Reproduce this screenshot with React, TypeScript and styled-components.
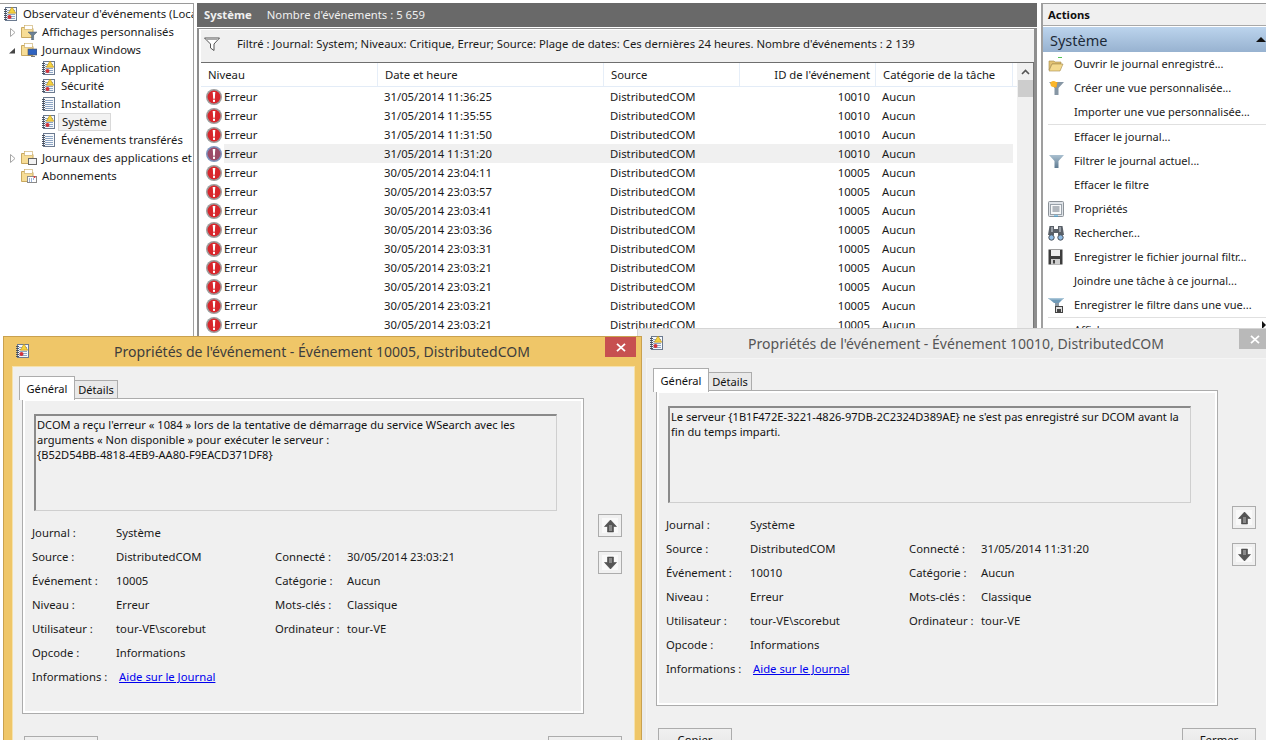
import React from 'react';
import styled, { createGlobalStyle } from 'styled-components';

const Global = createGlobalStyle`
  html, body { margin: 0; padding: 0; background: #fff; overflow: hidden; }
  #root { width: 1266px; height: 740px; overflow: hidden; position: relative; }
  * { box-sizing: border-box; }
`;
const FONT = `"Noto Sans", "Open Sans", sans-serif`;

const Page = styled.div`
  position: relative; width: 1266px; height: 740px; overflow: hidden; display: flex; padding-top: 3px;
  font: 11.3px/16px ${FONT}; color: #1a1a1a; background: #fff;
`;
const TreePanel = styled.div`
  width: 194px; flex: none; border-top: 1px solid #9a9a9a; border-right: 1px solid #a0a0a0; overflow: hidden; padding-top: 1px;
`;
const TreeRow = styled.div<{ $level: number }>`
  height: 18px; display: flex; align-items: center; white-space: nowrap; flex-wrap: nowrap;
  padding-left: ${p => [3, 8, 41][p.$level]}px;
`;
const Expander = styled.span`
  width: 13px; flex: none; display: flex; align-items: center;
`;
const TreeIcon = styled.span<{ $wide?: boolean }>`
  width: ${p => (p.$wide ? '16px' : '15px')}; height: 16px; flex: none; margin-right: 5px; display: flex; align-items: center;
`;
const TreeLabel = styled.span`
  white-space: nowrap;
`;
const SelectedBox = styled.div`
  display: flex; align-items: center; height: 18px; margin-left: -3px; padding-left: 3px; padding-right: 3px;
  background: #f2f2f2; border: 1px solid #d9d9d9;
`;
const CenterPanel = styled.div`
  width: 840px; flex: none; margin-left: 3px; display: flex; flex-direction: column;
`;
const CenterHeader = styled.div`
  height: 24px; flex: none; background: #696969; color: #f0f0f0; display: flex; align-items: center; padding-left: 7px; gap: 15px;
  b { font-weight: 700; }
`;
const ListFrame = styled.div`
  flex: 1; margin-top: 1px; border: 1px solid #8e8e8e; border-left-width: 2px; border-right-width: 3px; border-bottom: 0; padding: 1px 0 0 2px;
  display: flex; flex-direction: column; min-height: 0;
  box-shadow: inset 0 0 0 1px #fff;
`;
const FilterBar = styled.div`
  height: 33px; flex: none; background: #f0f0f0; border-bottom: 1px solid #6e6e6e; display: flex; align-items: center; padding: 0 0 4px 3px; white-space: nowrap;
  svg { margin-right: 17px; }
`;
const ListArea = styled.div`
  flex: 1; display: flex; min-height: 0; border-right: 1px solid #777;
`;
const Table = styled.div`
  flex: 1; min-width: 0; overflow: hidden; padding-right: 3px;
`;
const cols = '177px 226px 136px 136px 137px';
const HeaderRow = styled.div`
  display: grid; grid-template-columns: ${cols}; height: 24px; border-bottom: 1px solid #e3ecf7; width: 816px;
`;
const HeaderCell = styled.div<{ $right?: boolean }>`
  border-right: 1px solid #e6eef8; display: flex; align-items: center; padding: 1px ${p => (p.$right ? '5px' : '6px')} 0 7px;
  justify-content: ${p => (p.$right ? 'flex-end' : 'flex-start')};
  white-space: nowrap;
`;
const DataRow = styled.div`
  display: grid; grid-template-columns: ${cols}; height: 19px; width: 812px; align-items: center;
`;
const LevelCell = styled.div`
  display: flex; align-items: center; padding-left: 5px; height: 19px; gap: 2px;
`;
const LevelText = styled.span<{ $sel?: boolean }>`
  flex: 1; height: 19px; line-height: 20px; background: ${p => (p.$sel ? '#f0f0f0' : 'transparent')};
`;
const DataCell = styled.div<{ $right?: boolean; $sel?: boolean }>`
  height: 19px; line-height: 20px; padding: 0 ${p => (p.$right ? '6px' : '0')} 0 ${p => (p.$right ? '0' : '6px')};
  text-align: ${p => (p.$right ? 'right' : 'left')};
  background: ${p => (p.$sel ? '#f0f0f0' : 'transparent')};
  white-space: nowrap;
`;
const Scrollbar = styled.div`
  width: 16px; flex: none; margin-right: 0; background: #f0f0f0; display: flex; flex-direction: column; align-items: center;
`;
const ScrollArrow = styled.div`
  height: 17px; display: flex; align-items: center; justify-content: center;
`;
const ScrollThumb = styled.div`
  width: 15px; height: 17px; background: #cdcdcd;
`;
const ActionsPanel = styled.div`
  width: 225px; flex: none; margin-left: 4px; border-top: 1px solid #9a9a9a; border-left: 2px solid #9f9f9f; overflow: hidden;
`;
const ActionsTitle = styled.div`
  height: 22px; margin-top: 0; background: #f0f0f0; border-bottom: 1px solid #a8a8a8; padding: 1px 0 0 5px; display: flex; align-items: center; font-weight: 700; color: #111;
`;
const ActionsSection = styled.div`
  height: 25px; margin-top: 1px; background: linear-gradient(#bcd4ed, #97b2d0); padding-left: 7px; display: flex; align-items: center; justify-content: space-between; font-size: 14.5px; color: #1c2a38;
`;
const SectionCaret = styled.span`
  width: 0; height: 0; border-left: 5px solid transparent; border-right: 5px solid transparent; border-bottom: 5px solid #111;
`;
const ActionList = styled.div`
  padding: 0 0 0 5px; margin-top: 0; font-size: 11.05px;
`;
const ActionRow = styled.div`
  height: 24px; display: flex; align-items: center; white-space: nowrap;
`;
const ActionLabel = styled.span`
  flex: 1;
`;
const SubmenuCaret = styled.span`
  width: 0; height: 0; border-top: 4px solid transparent; border-bottom: 4px solid transparent; border-left: 4px solid #111; margin: -10px 0 0 0;
`;
const ActionIcon = styled.span`
  width: 26px; flex: none; display: flex; align-items: center;
`;
const ActionSep = styled.div`
  height: 1px; background: #e0e0e0;
`;
const Window = styled.div<{ $active?: boolean; $left: number; $top: number; $z: number }>`
  position: absolute; left: ${p => p.$left}px; top: ${p => p.$top}px; z-index: ${p => p.$z};
  width: 639px; height: 420px; padding: 0 6px 7px 8px;
  background: ${p => (p.$active ? '#efc668' : '#ebebeb')};
  border: 1px solid ${p => (p.$active ? '#c9a14f' : '#d5d5d5')};
  font-size: 11.3px;
`;
const TitleBar = styled.div<{ $active?: boolean }>`
  position: relative; height: 29px; display: flex; align-items: center; justify-content: center; padding-right: 3px; font-size: 14.05px; color: ${p => (p.$active ? '#3d3d3d' : '#555')};
`;
const TitleIcon = styled.span`
  position: absolute; left: 3px; top: 6px; display: flex;
`;
const CloseBtn = styled.span<{ $active?: boolean }>`
  position: absolute; right: -1px; top: 0; width: 31px; height: 20px; display: flex; align-items: center; justify-content: center;
  background: ${p => (p.$active ? '#c75050' : '#b9b9b9')};
`;
const Client = styled.div<{ $active?: boolean }>`
  height: 400px; background: #f0f0f0; border: 1px solid ${p => (p.$active ? '#f5e2ae' : '#f5f5f5')}; padding: 8px 0 0 8px;
`;
const Tabs = styled.div`
  display: flex; align-items: flex-end; height: 24px; position: relative; z-index: 1; margin-left: -2px; font-size: 11.1px;
`;
const Tab = styled.div<{ $active?: boolean }>`
  display: flex; align-items: center; justify-content: center; color: #111;
  width: ${p => (p.$active ? '56px' : '44px')}; height: ${p => (p.$active ? '24px' : '19px')};
  background: ${p => (p.$active ? '#fff' : '#e9e9e9')};
  border: 1px solid #acacac; border-bottom: ${p => (p.$active ? '0' : '1px solid #acacac')};
  margin-left: ${p => (p.$active ? '0' : '-1px')};
  margin-bottom: ${p => (p.$active ? '-1px' : '0')};
`;
const Content = styled.div`
  display: flex; align-items: flex-start;
`;
const TabPanel = styled.div`
  width: 562px; height: 316px; margin-left: 1px; background: #f0f0f0; border: 1px solid #acacac; box-shadow: inset 0 0 0 2px #fff; padding: 15px 22px 0 11px; margin-top: -1px;
`;
const MessageBox = styled.div`
  width: 523px; height: 97px; border: 2px solid #8a8a8a; border-right: 1px solid #cfcfcf; border-bottom: 1px solid #cfcfcf; padding: 1px 0 0 1px; background: #f0f0f0; line-height: 15px; color: #111; font-size: 11.1px;
`;
const Fields = styled.div`
  display: grid; grid-template-columns: 84px 159px 72px 1fr; grid-auto-rows: 24px; margin: 10px 0 0 -2px; align-items: center; white-space: nowrap;
`;
const FieldLink = styled.a`
  color: #0000ee; text-decoration: underline; padding-left: 3px;
`;
const ArrowColumn = styled.div`
  display: flex; flex-direction: column; gap: 14px; margin: 115px 0 0 14px;
`;
const ArrowBtn = styled.div`
  width: 24px; height: 23px; background: #f0f0f0; border: 1px solid #acacac; display: flex; align-items: center; justify-content: center;
`;
const ArrowFace = styled.span`
  width: 16px; height: 15px; background: #f9f9f9; display: flex; align-items: center; justify-content: center;
`;
const Buttons = styled.div`
  display: flex; justify-content: space-between; width: 598px; margin: 22px 0 0 3px;
`;
const Button = styled.div`
  width: 74px; height: 24px; background: linear-gradient(#f0f0f0, #e5e5e5); border: 1px solid #acacac; display: flex; align-items: center; justify-content: center; color: #111;
`;

const LogBook = ({ warn = true, dot = true }: { warn?: boolean; dot?: boolean }) => (
  <svg width="15" height="16" viewBox="0 0 15 16">
    <rect x="2.500" y="1.500" width="11" height="13" fill="#f7f9fc" stroke="#6b7a90" />
    {[4, 6, 8, 10, 12].map(y => <path key={y} d={`M4 ${y + .5}h8`} stroke="#8ea6c4" />)}
    {[3, 5, 7, 9, 11, 13].map(y => <path key={y} d={`M1 ${y + .5}h3`} stroke="#4a5260" />)}
    {warn && <path d="M9 1l3.700 6.200h-7.400z" fill="#f5d33f" stroke="#b78a12" strokeWidth=".6" />}
    {dot && <circle cx="6.500" cy="11" r="2" fill="#d3333a" />}
  </svg>
);
const Folder = ({ badge }: { badge: 'filter' | 'monitor' | 'doc' | 'sub' }) => (
  <svg width="16" height="16" viewBox="0 0 16 16">
    <path d="M.5 3.500h5l1 1h5.500v9H.5z" fill="#f7dd96" stroke="#c8a860" />
    <rect x="3.500" y="1.500" width="8" height="4" fill="#fff" stroke="#c8a860" strokeWidth=".6" />
    {badge === 'filter' && <path d="M7 8h9l-3.400 3.500V16h-2v-4.500z" fill="#6d8296" stroke="#495a6a" strokeWidth=".5" />}
    {badge === 'monitor' && <><rect x="7" y="7" width="9" height="6" fill="#2f63c0" stroke="#555" strokeWidth=".6" /><path d="M10 14.500h4" stroke="#777" /></>}
    {badge === 'doc' && <rect x="7.500" y="8.500" width="8" height="6" fill="#f2f2f2" stroke="#666" />}
    {badge === 'sub' && <><rect x="6.500" y="8.500" width="9" height="6" fill="#fff" stroke="#8a8a8a" /><path d="M8 11h1M10 11h1M12 11h1M8 13h1M10 13h1" stroke="#3a6ab8" /><circle cx="13.500" cy="9" r="1" fill="#d33" /></>}
  </svg>
);
const Triangle = ({ open }: { open?: boolean }) => open ? (
  <svg width="9" height="9" viewBox="0 0 9 9"><path d="M1 7.500L7 2v5.500z" fill="#444" /></svg>
) : (
  <svg width="9" height="11" viewBox="0 0 9 11"><path d="M2.500 1.500l4.500 4-4.500 4z" fill="#fff" stroke="#a6a6a6" /></svg>
);
const ErrorIcon = ({ sel }: { sel?: boolean }) => (
  <svg width="16" height="16" viewBox="0 0 16 16" style={{ flex: 'none' }}>
    <circle cx="8" cy="8" r="8" fill={sel ? '#7f95bf' : '#9d9d9d'} />
    <circle cx="8" cy="8" r="6.500" fill={sel ? '#9b4a68' : '#d8262c'} />
    <path d="M6.700 3h2.600l-.5 6.700H7.200z" fill="#fff" />
    <rect x="7" y="10.700" width="2" height="2.200" fill="#fff" />
  </svg>
);
const Funnel = () => (
  <svg width="17" height="15" viewBox="0 0 17 15">
    <defs><linearGradient id="fg" x1="0" x2="0" y1="0" y2="1"><stop offset="0" stopColor="#aac0d0" /><stop offset="1" stopColor="#5f7b92" /></linearGradient></defs>
    <path d="M1 1h15l-5.500 6v7h-4V7z" fill="url(#fg)" />
  </svg>
);
const OrangeFunnel = () => (
  <svg width="17" height="15" viewBox="0 0 17 15">
    <path d="M1 1h15l-5.500 6v7h-4V7z" fill="#8696a4" />
    <path d="M2 1h7.500L8.500 6.500 6.500 6.500z" fill="#f6a81c" />
    <circle cx="5.500" cy="3" r="3" fill="#fbb62a" />
  </svg>
);
const OutlineFunnel = () => (
  <svg width="16" height="14" viewBox="0 0 16 14" style={{ flex: 'none' }}>
    <path d="M.5 1h15L10 7v6.500L6.500 11V7z" fill="#fff" stroke="#555" />
    <path d="M3 2.500h10" stroke="#aaa" />
  </svg>
);
const OpenFolderIcon = () => (
  <svg width="16" height="15" viewBox="0 0 16 15">
    <path d="M1 4h5l1 1h6v2H4L1 13z" fill="#e2c274" stroke="#a58a4c" strokeWidth=".6" />
    <path d="M4 7h11l-3 7H1z" fill="#f3d98e" stroke="#a58a4c" strokeWidth=".6" />
    <path d="M10 .5h4" stroke="#55c455" />
  </svg>
);
const PropsIcon = () => (
  <svg width="16" height="16" viewBox="0 0 16 16">
    <rect x=".5" y=".5" width="15" height="15" rx="1" fill="#dfe3e8" stroke="#8c9298" />
    <rect x="2.500" y="3.500" width="11" height="10" fill="#f7f8f9" stroke="#9aa2aa" />
    <path d="M4.500 6h7M4.500 8h7M4.500 10h7" stroke="#6a7480" />
    <path d="M6 15h4" stroke="#3ba7e0" />
  </svg>
);
const BinocularsIcon = () => (
  <svg width="16" height="16" viewBox="0 0 16 16">
    <path d="M1.500 1h4.500v3h4V1h4.500l1.500 9h-6V8H6v2H0z" fill="#5a6068" />
    <path d="M3 2h2v5H3zM11 2h2v5h-2z" fill="#9aa0a8" />
    <circle cx="3.500" cy="12.500" r="2.700" fill="#8fbbe4" stroke="#4a5058" />
    <circle cx="12.500" cy="12.500" r="2.700" fill="#8fbbe4" stroke="#4a5058" />
  </svg>
);
const SaveIcon = () => (
  <svg width="15" height="16" viewBox="0 0 15 16">
    <path d="M.5.500h14v15H.5z" fill="#3d3d3d" />
    <rect x="3" y="1" width="9" height="6" fill="#eee" />
    <rect x="3" y="10" width="9" height="5.500" fill="#cfcfcf" />
    <rect x="5" y="11" width="2" height="3.500" fill="#444" />
  </svg>
);
const SaveFilterIcon = () => (
  <svg width="17" height="16" viewBox="0 0 17 16">
    <path d="M0 1h16l-5 5H6z" fill="#6f9ab8" />
    <path d="M0 1h16l-1.500 1.500H1.500z" fill="#a9c6d8" />
    <rect x="7" y="6" width="4" height="4" fill="#8a98a4" />
    <rect x="7.500" y="9.500" width="7" height="6" fill="#dcdcdc" stroke="#444" />
    <rect x="9" y="12" width="4" height="3" fill="#444" />
  </svg>
);
const UpDown = ({ up }: { up?: boolean }) => (
  <svg width="13" height="14" viewBox="0 0 13 14">
    <path d={up ? 'M6.500 1L12.500 7.500H9.500V13h-6V7.500H.5z' : 'M6.500 13L12.500 6.500H9.500V1h-6v5.500H.5z'} fill="#555" stroke="#3a3a3a" strokeWidth=".5" />
    <path d={up ? 'M5 6h3v6H5z' : 'M5 2h3v5H5z'} fill="#8a8a8a" />
  </svg>
);
const CloseX = () => (
  <svg width="10" height="9" viewBox="0 0 10 9"><path d="M1 .8l8 7.400M9 .8L1 8.200" stroke="#fff" strokeWidth="1.800" /></svg>
);

const rows: [string, string, boolean?][] = [
  ['31/05/2014 11:36:25', '10010'], ['31/05/2014 11:35:55', '10010'], ['31/05/2014 11:31:50', '10010'],
  ['31/05/2014 11:31:20', '10010', true], ['30/05/2014 23:04:11', '10005'], ['30/05/2014 23:03:57', '10005'],
  ['30/05/2014 23:03:41', '10005'], ['30/05/2014 23:03:36', '10005'], ['30/05/2014 23:03:31', '10005'],
  ['30/05/2014 23:03:21', '10005'], ['30/05/2014 23:03:21', '10005'], ['30/05/2014 23:03:21', '10005'],
  ['30/05/2014 23:03:21', '10005'],
];

type Item = { label?: string; icon?: React.ReactNode; sep?: boolean; sub?: boolean };
const actions: Item[] = [
  { label: 'Ouvrir le journal enregistré...', icon: <OpenFolderIcon /> },
  { label: 'Créer une vue personnalisée...', icon: <OrangeFunnel /> },
  { label: 'Importer une vue personnalisée...' },
  { sep: true },
  { label: 'Effacer le journal...' },
  { label: 'Filtrer le journal actuel...', icon: <Funnel /> },
  { label: 'Effacer le filtre' },
  { label: 'Propriétés', icon: <PropsIcon /> },
  { label: 'Rechercher...', icon: <BinocularsIcon /> },
  { label: 'Enregistrer le fichier journal filtr...', icon: <SaveIcon /> },
  { label: 'Joindre une tâche à ce journal...' },
  { label: 'Enregistrer le filtre dans une vue...', icon: <SaveFilterIcon /> },
  { sep: true },
  { label: 'Affichage', sub: true },
];

type DlgProps = { active?: boolean; left: number; top: number; z: number; id: string; date: string; message: React.ReactNode };
const Dialog = ({ active, left, top, z, id, date, message }: DlgProps) => (
  <Window $active={active} $left={left} $top={top} $z={z}>
    <TitleBar $active={active}>
      <TitleIcon><LogBook /></TitleIcon>
      Propriétés de l'événement - Événement {id}, DistributedCOM
      <CloseBtn $active={active}><CloseX /></CloseBtn>
    </TitleBar>
    <Client $active={active}>
      <Tabs><Tab $active>Général</Tab><Tab>Détails</Tab></Tabs>
      <Content>
        <TabPanel>
          <MessageBox>{message}</MessageBox>
          <Fields>
            <span>Journal :</span><span>Système</span><span /><span />
            <span>Source :</span><span>DistributedCOM</span><span>Connecté :</span><span>{date}</span>
            <span>Événement :</span><span>{id}</span><span>Catégorie :</span><span>Aucun</span>
            <span>Niveau :</span><span>Erreur</span><span>Mots-clés :</span><span>Classique</span>
            <span>Utilisateur :</span><span>tour-VE\scorebut</span><span>Ordinateur :</span><span>tour-VE</span>
            <span>Opcode :</span><span>Informations</span><span /><span />
            <span>Informations :</span><span><FieldLink>Aide sur le Journal</FieldLink></span><span /><span />
          </Fields>
        </TabPanel>
        <ArrowColumn>
          <ArrowBtn><ArrowFace><UpDown up /></ArrowFace></ArrowBtn>
          <ArrowBtn><ArrowFace><UpDown /></ArrowFace></ArrowBtn>
        </ArrowColumn>
      </Content>
      <Buttons><Button>Copier</Button><Button>Fermer</Button></Buttons>
    </Client>
  </Window>
);

export default function App() {
  return (
    <Page>
      <Global />
      <TreePanel>
        <TreeRow $level={0}><TreeIcon><LogBook /></TreeIcon><TreeLabel>Observateur d'événements (Local)</TreeLabel></TreeRow>
        <TreeRow $level={1}><Expander><Triangle /></Expander><TreeIcon $wide><Folder badge="filter" /></TreeIcon><TreeLabel>Affichages personnalisés</TreeLabel></TreeRow>
        <TreeRow $level={1}><Expander><Triangle open /></Expander><TreeIcon $wide><Folder badge="monitor" /></TreeIcon><TreeLabel>Journaux Windows</TreeLabel></TreeRow>
        <TreeRow $level={2}><TreeIcon><LogBook /></TreeIcon><TreeLabel>Application</TreeLabel></TreeRow>
        <TreeRow $level={2}><TreeIcon><LogBook /></TreeIcon><TreeLabel>Sécurité</TreeLabel></TreeRow>
        <TreeRow $level={2}><TreeIcon><LogBook warn={false} dot={false} /></TreeIcon><TreeLabel>Installation</TreeLabel></TreeRow>
        <TreeRow $level={2}><TreeIcon><LogBook /></TreeIcon><SelectedBox>Système</SelectedBox></TreeRow>
        <TreeRow $level={2}><TreeIcon><LogBook warn={false} dot={false} /></TreeIcon><TreeLabel>Événements transférés</TreeLabel></TreeRow>
        <TreeRow $level={1}><Expander><Triangle /></Expander><TreeIcon $wide><Folder badge="doc" /></TreeIcon><TreeLabel>Journaux des applications et de services</TreeLabel></TreeRow>
        <TreeRow $level={1}><Expander /><TreeIcon $wide><Folder badge="sub" /></TreeIcon><TreeLabel>Abonnements</TreeLabel></TreeRow>
      </TreePanel>
      <CenterPanel>
        <CenterHeader><b>Système</b><span>Nombre d'événements : 5 659</span></CenterHeader>
        <ListFrame>
          <FilterBar>
            <OutlineFunnel />
            Filtré : Journal: System; Niveaux: Critique, Erreur; Source: Plage de dates: Ces dernières 24 heures. Nombre d'événements : 2 139
          </FilterBar>
          <ListArea>
            <Table>
              <HeaderRow>
                <HeaderCell>Niveau</HeaderCell>
                <HeaderCell>Date et heure</HeaderCell>
                <HeaderCell>Source</HeaderCell>
                <HeaderCell $right>ID de l'événement</HeaderCell>
                <HeaderCell>Catégorie de la tâche</HeaderCell>
              </HeaderRow>
              {rows.map(([d, id, sel], i) => (
                <DataRow key={i}>
                  <LevelCell><ErrorIcon sel={sel} /><LevelText $sel={sel}>Erreur</LevelText></LevelCell>
                  <DataCell $sel={sel}>{d}</DataCell>
                  <DataCell $sel={sel}>DistributedCOM</DataCell>
                  <DataCell $sel={sel} $right>{id}</DataCell>
                  <DataCell $sel={sel}>Aucun</DataCell>
                </DataRow>
              ))}
            </Table>
            <Scrollbar>
              <ScrollArrow>
                <svg width="9" height="6" viewBox="0 0 9 6"><path d="M1 5l3.500-3.500L8 5" fill="none" stroke="#555" strokeWidth="1.600" /></svg>
              </ScrollArrow>
              <ScrollThumb />
            </Scrollbar>
          </ListArea>
        </ListFrame>
      </CenterPanel>
      <ActionsPanel>
        <ActionsTitle>Actions</ActionsTitle>
        <ActionsSection>Système<SectionCaret /></ActionsSection>
        <ActionList>
          {actions.map((a, i) => a.sep
            ? <ActionSep key={i} />
            : <ActionRow key={i}><ActionIcon>{a.icon}</ActionIcon><ActionLabel>{a.label}</ActionLabel>{a.sub && <SubmenuCaret />}</ActionRow>)}
        </ActionList>
      </ActionsPanel>
      <Dialog left={637} top={328} z={1} id="10010" date="31/05/2014 11:31:20"
        message={<>Le serveur {'{1B1F472E-3221-4826-97DB-2C2324D389AE}'} ne s'est pas enregistré sur DCOM avant la<br />fin du temps imparti.</>} />
      <Dialog active left={3} top={336} z={2} id="10005" date="30/05/2014 23:03:21"
        message={<>DCOM a reçu l'erreur « 1084 » lors de la tentative de démarrage du service WSearch avec les<br />arguments « Non disponible » pour exécuter le serveur :<br />{'{B52D54BB-4818-4EB9-AA80-F9EACD371DF8}'}</>} />
    </Page>
  );
}
